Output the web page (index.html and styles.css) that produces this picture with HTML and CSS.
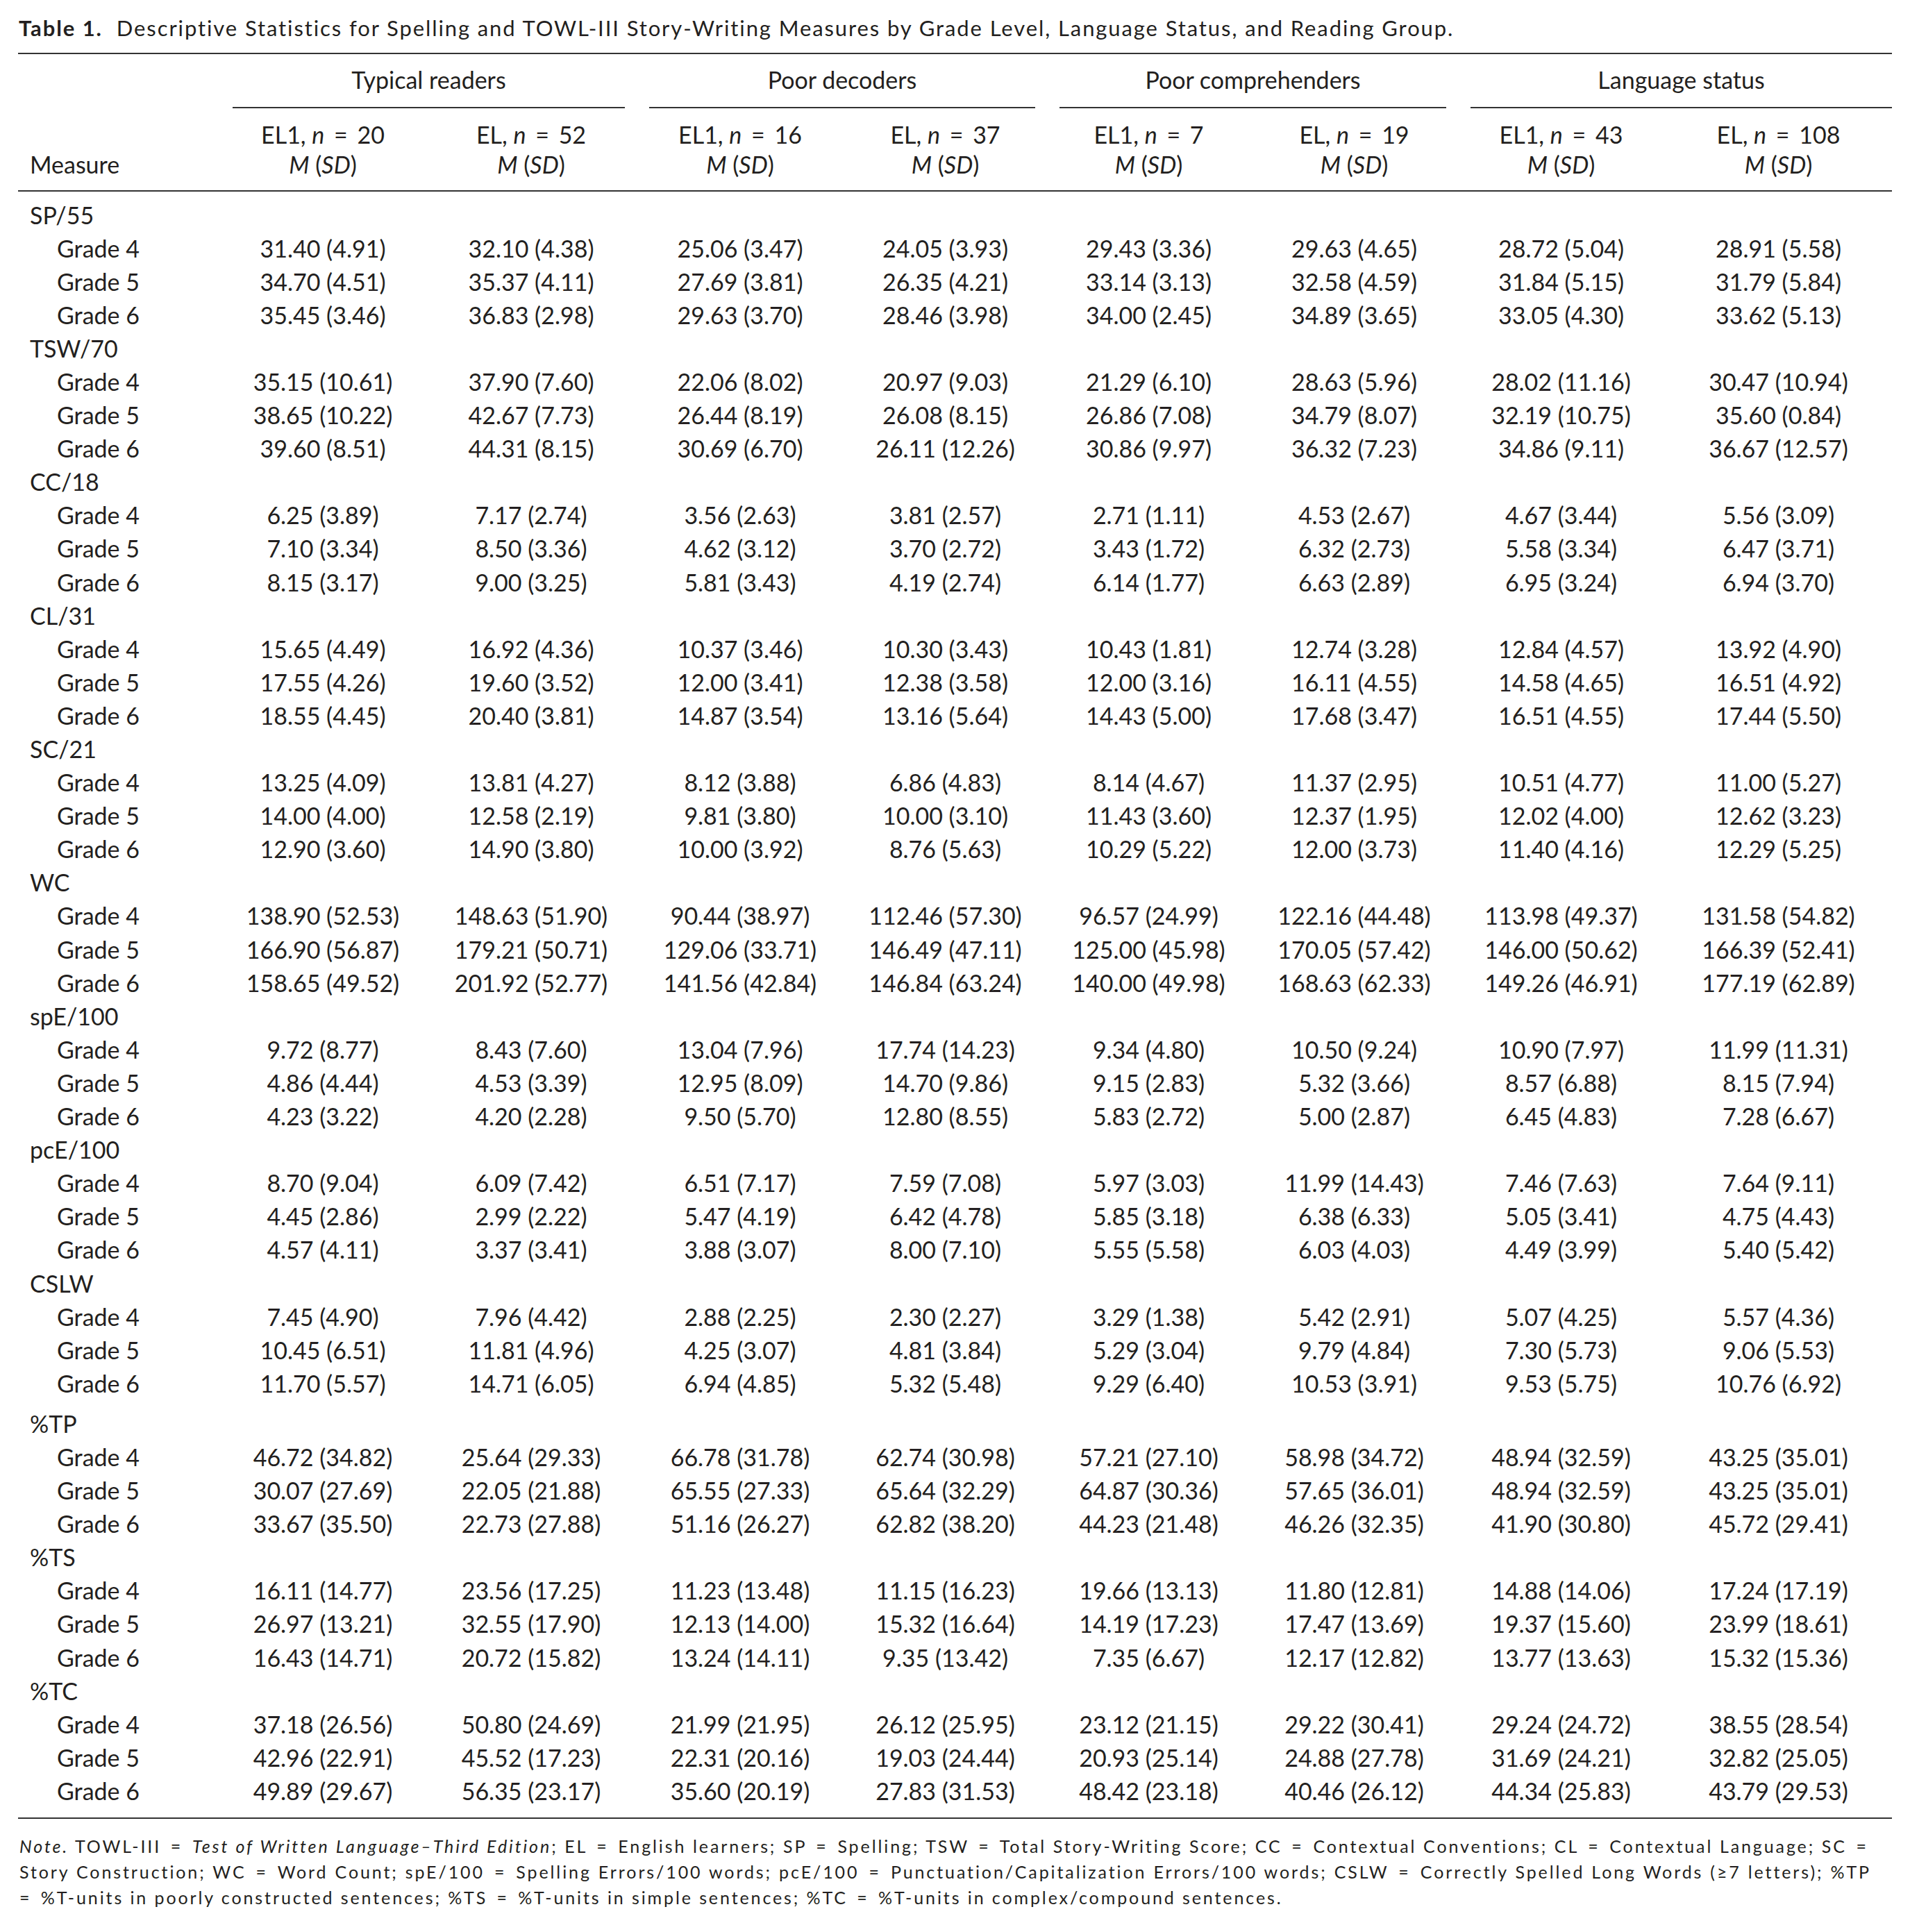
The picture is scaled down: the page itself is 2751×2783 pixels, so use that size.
FILE: index.html
```html
<!DOCTYPE html>
<html lang="en">
<head>
<meta charset="utf-8">
<title>Table 1</title>
<link rel="stylesheet" href="styles.css">
</head>
<body>
<div class="page">
  <div class="caption"><b class="label">Table 1.</b>Descriptive Statistics for Spelling and TOWL-III Story-Writing Measures by Grade Level, Language Status, and Reading Group.</div>
  <div class="table">
    <div class="groups">
      <div></div>
      <div class="grp">Typical readers</div>
      <div class="grp">Poor decoders</div>
      <div class="grp">Poor comprehenders</div>
      <div class="grp last">Language status</div>
    </div>
    <div class="sub">
      <div class="measure">Measure</div>
      <div class="sh">EL1, <i>n</i> <span class="eq">=</span> 20<br><i>M</i> (<i>SD</i>)</div>
      <div class="sh">EL, <i>n</i> <span class="eq">=</span> 52<br><i>M</i> (<i>SD</i>)</div>
      <div class="sh">EL1, <i>n</i> <span class="eq">=</span> 16<br><i>M</i> (<i>SD</i>)</div>
      <div class="sh">EL, <i>n</i> <span class="eq">=</span> 37<br><i>M</i> (<i>SD</i>)</div>
      <div class="sh">EL1, <i>n</i> <span class="eq">=</span> 7<br><i>M</i> (<i>SD</i>)</div>
      <div class="sh">EL, <i>n</i> <span class="eq">=</span> 19<br><i>M</i> (<i>SD</i>)</div>
      <div class="sh">EL1, <i>n</i> <span class="eq">=</span> 43<br><i>M</i> (<i>SD</i>)</div>
      <div class="sh">EL, <i>n</i> <span class="eq">=</span> 108<br><i>M</i> (<i>SD</i>)</div>
    </div>
    <div class="body">
      <div class="r"><span class="m">SP/55</span></div>
      <div class="r"><span class="g">Grade 4</span><span>31.40 (4.91)</span><span>32.10 (4.38)</span><span>25.06 (3.47)</span><span>24.05 (3.93)</span><span>29.43 (3.36)</span><span>29.63 (4.65)</span><span>28.72 (5.04)</span><span>28.91 (5.58)</span></div>
      <div class="r"><span class="g">Grade 5</span><span>34.70 (4.51)</span><span>35.37 (4.11)</span><span>27.69 (3.81)</span><span>26.35 (4.21)</span><span>33.14 (3.13)</span><span>32.58 (4.59)</span><span>31.84 (5.15)</span><span>31.79 (5.84)</span></div>
      <div class="r"><span class="g">Grade 6</span><span>35.45 (3.46)</span><span>36.83 (2.98)</span><span>29.63 (3.70)</span><span>28.46 (3.98)</span><span>34.00 (2.45)</span><span>34.89 (3.65)</span><span>33.05 (4.30)</span><span>33.62 (5.13)</span></div>

      <div class="r"><span class="m">TSW/70</span></div>
      <div class="r"><span class="g">Grade 4</span><span>35.15 (10.61)</span><span>37.90 (7.60)</span><span>22.06 (8.02)</span><span>20.97 (9.03)</span><span>21.29 (6.10)</span><span>28.63 (5.96)</span><span>28.02 (11.16)</span><span>30.47 (10.94)</span></div>
      <div class="r"><span class="g">Grade 5</span><span>38.65 (10.22)</span><span>42.67 (7.73)</span><span>26.44 (8.19)</span><span>26.08 (8.15)</span><span>26.86 (7.08)</span><span>34.79 (8.07)</span><span>32.19 (10.75)</span><span>35.60 (0.84)</span></div>
      <div class="r"><span class="g">Grade 6</span><span>39.60 (8.51)</span><span>44.31 (8.15)</span><span>30.69 (6.70)</span><span>26.11 (12.26)</span><span>30.86 (9.97)</span><span>36.32 (7.23)</span><span>34.86 (9.11)</span><span>36.67 (12.57)</span></div>

      <div class="r"><span class="m">CC/18</span></div>
      <div class="r"><span class="g">Grade 4</span><span>6.25 (3.89)</span><span>7.17 (2.74)</span><span>3.56 (2.63)</span><span>3.81 (2.57)</span><span>2.71 (1.11)</span><span>4.53 (2.67)</span><span>4.67 (3.44)</span><span>5.56 (3.09)</span></div>
      <div class="r"><span class="g">Grade 5</span><span>7.10 (3.34)</span><span>8.50 (3.36)</span><span>4.62 (3.12)</span><span>3.70 (2.72)</span><span>3.43 (1.72)</span><span>6.32 (2.73)</span><span>5.58 (3.34)</span><span>6.47 (3.71)</span></div>
      <div class="r"><span class="g">Grade 6</span><span>8.15 (3.17)</span><span>9.00 (3.25)</span><span>5.81 (3.43)</span><span>4.19 (2.74)</span><span>6.14 (1.77)</span><span>6.63 (2.89)</span><span>6.95 (3.24)</span><span>6.94 (3.70)</span></div>

      <div class="r"><span class="m">CL/31</span></div>
      <div class="r"><span class="g">Grade 4</span><span>15.65 (4.49)</span><span>16.92 (4.36)</span><span>10.37 (3.46)</span><span>10.30 (3.43)</span><span>10.43 (1.81)</span><span>12.74 (3.28)</span><span>12.84 (4.57)</span><span>13.92 (4.90)</span></div>
      <div class="r"><span class="g">Grade 5</span><span>17.55 (4.26)</span><span>19.60 (3.52)</span><span>12.00 (3.41)</span><span>12.38 (3.58)</span><span>12.00 (3.16)</span><span>16.11 (4.55)</span><span>14.58 (4.65)</span><span>16.51 (4.92)</span></div>
      <div class="r"><span class="g">Grade 6</span><span>18.55 (4.45)</span><span>20.40 (3.81)</span><span>14.87 (3.54)</span><span>13.16 (5.64)</span><span>14.43 (5.00)</span><span>17.68 (3.47)</span><span>16.51 (4.55)</span><span>17.44 (5.50)</span></div>

      <div class="r"><span class="m">SC/21</span></div>
      <div class="r"><span class="g">Grade 4</span><span>13.25 (4.09)</span><span>13.81 (4.27)</span><span>8.12 (3.88)</span><span>6.86 (4.83)</span><span>8.14 (4.67)</span><span>11.37 (2.95)</span><span>10.51 (4.77)</span><span>11.00 (5.27)</span></div>
      <div class="r"><span class="g">Grade 5</span><span>14.00 (4.00)</span><span>12.58 (2.19)</span><span>9.81 (3.80)</span><span>10.00 (3.10)</span><span>11.43 (3.60)</span><span>12.37 (1.95)</span><span>12.02 (4.00)</span><span>12.62 (3.23)</span></div>
      <div class="r"><span class="g">Grade 6</span><span>12.90 (3.60)</span><span>14.90 (3.80)</span><span>10.00 (3.92)</span><span>8.76 (5.63)</span><span>10.29 (5.22)</span><span>12.00 (3.73)</span><span>11.40 (4.16)</span><span>12.29 (5.25)</span></div>

      <div class="r"><span class="m">WC</span></div>
      <div class="r"><span class="g">Grade 4</span><span>138.90 (52.53)</span><span>148.63 (51.90)</span><span>90.44 (38.97)</span><span>112.46 (57.30)</span><span>96.57 (24.99)</span><span>122.16 (44.48)</span><span>113.98 (49.37)</span><span>131.58 (54.82)</span></div>
      <div class="r"><span class="g">Grade 5</span><span>166.90 (56.87)</span><span>179.21 (50.71)</span><span>129.06 (33.71)</span><span>146.49 (47.11)</span><span>125.00 (45.98)</span><span>170.05 (57.42)</span><span>146.00 (50.62)</span><span>166.39 (52.41)</span></div>
      <div class="r"><span class="g">Grade 6</span><span>158.65 (49.52)</span><span>201.92 (52.77)</span><span>141.56 (42.84)</span><span>146.84 (63.24)</span><span>140.00 (49.98)</span><span>168.63 (62.33)</span><span>149.26 (46.91)</span><span>177.19 (62.89)</span></div>

      <div class="r"><span class="m">spE/100</span></div>
      <div class="r"><span class="g">Grade 4</span><span>9.72 (8.77)</span><span>8.43 (7.60)</span><span>13.04 (7.96)</span><span>17.74 (14.23)</span><span>9.34 (4.80)</span><span>10.50 (9.24)</span><span>10.90 (7.97)</span><span>11.99 (11.31)</span></div>
      <div class="r"><span class="g">Grade 5</span><span>4.86 (4.44)</span><span>4.53 (3.39)</span><span>12.95 (8.09)</span><span>14.70 (9.86)</span><span>9.15 (2.83)</span><span>5.32 (3.66)</span><span>8.57 (6.88)</span><span>8.15 (7.94)</span></div>
      <div class="r"><span class="g">Grade 6</span><span>4.23 (3.22)</span><span>4.20 (2.28)</span><span>9.50 (5.70)</span><span>12.80 (8.55)</span><span>5.83 (2.72)</span><span>5.00 (2.87)</span><span>6.45 (4.83)</span><span>7.28 (6.67)</span></div>

      <div class="r"><span class="m">pcE/100</span></div>
      <div class="r"><span class="g">Grade 4</span><span>8.70 (9.04)</span><span>6.09 (7.42)</span><span>6.51 (7.17)</span><span>7.59 (7.08)</span><span>5.97 (3.03)</span><span>11.99 (14.43)</span><span>7.46 (7.63)</span><span>7.64 (9.11)</span></div>
      <div class="r"><span class="g">Grade 5</span><span>4.45 (2.86)</span><span>2.99 (2.22)</span><span>5.47 (4.19)</span><span>6.42 (4.78)</span><span>5.85 (3.18)</span><span>6.38 (6.33)</span><span>5.05 (3.41)</span><span>4.75 (4.43)</span></div>
      <div class="r"><span class="g">Grade 6</span><span>4.57 (4.11)</span><span>3.37 (3.41)</span><span>3.88 (3.07)</span><span>8.00 (7.10)</span><span>5.55 (5.58)</span><span>6.03 (4.03)</span><span>4.49 (3.99)</span><span>5.40 (5.42)</span></div>

      <div class="r"><span class="m">CSLW</span></div>
      <div class="r"><span class="g">Grade 4</span><span>7.45 (4.90)</span><span>7.96 (4.42)</span><span>2.88 (2.25)</span><span>2.30 (2.27)</span><span>3.29 (1.38)</span><span>5.42 (2.91)</span><span>5.07 (4.25)</span><span>5.57 (4.36)</span></div>
      <div class="r"><span class="g">Grade 5</span><span>10.45 (6.51)</span><span>11.81 (4.96)</span><span>4.25 (3.07)</span><span>4.81 (3.84)</span><span>5.29 (3.04)</span><span>9.79 (4.84)</span><span>7.30 (5.73)</span><span>9.06 (5.53)</span></div>
      <div class="r"><span class="g">Grade 6</span><span>11.70 (5.57)</span><span>14.71 (6.05)</span><span>6.94 (4.85)</span><span>5.32 (5.48)</span><span>9.29 (6.40)</span><span>10.53 (3.91)</span><span>9.53 (5.75)</span><span>10.76 (6.92)</span></div>

      <div class="r gap"><span class="m">%TP</span></div>
      <div class="r"><span class="g">Grade 4</span><span>46.72 (34.82)</span><span>25.64 (29.33)</span><span>66.78 (31.78)</span><span>62.74 (30.98)</span><span>57.21 (27.10)</span><span>58.98 (34.72)</span><span>48.94 (32.59)</span><span>43.25 (35.01)</span></div>
      <div class="r"><span class="g">Grade 5</span><span>30.07 (27.69)</span><span>22.05 (21.88)</span><span>65.55 (27.33)</span><span>65.64 (32.29)</span><span>64.87 (30.36)</span><span>57.65 (36.01)</span><span>48.94 (32.59)</span><span>43.25 (35.01)</span></div>
      <div class="r"><span class="g">Grade 6</span><span>33.67 (35.50)</span><span>22.73 (27.88)</span><span>51.16 (26.27)</span><span>62.82 (38.20)</span><span>44.23 (21.48)</span><span>46.26 (32.35)</span><span>41.90 (30.80)</span><span>45.72 (29.41)</span></div>

      <div class="r"><span class="m">%TS</span></div>
      <div class="r"><span class="g">Grade 4</span><span>16.11 (14.77)</span><span>23.56 (17.25)</span><span>11.23 (13.48)</span><span>11.15 (16.23)</span><span>19.66 (13.13)</span><span>11.80 (12.81)</span><span>14.88 (14.06)</span><span>17.24 (17.19)</span></div>
      <div class="r"><span class="g">Grade 5</span><span>26.97 (13.21)</span><span>32.55 (17.90)</span><span>12.13 (14.00)</span><span>15.32 (16.64)</span><span>14.19 (17.23)</span><span>17.47 (13.69)</span><span>19.37 (15.60)</span><span>23.99 (18.61)</span></div>
      <div class="r"><span class="g">Grade 6</span><span>16.43 (14.71)</span><span>20.72 (15.82)</span><span>13.24 (14.11)</span><span>9.35 (13.42)</span><span>7.35 (6.67)</span><span>12.17 (12.82)</span><span>13.77 (13.63)</span><span>15.32 (15.36)</span></div>

      <div class="r"><span class="m">%TC</span></div>
      <div class="r"><span class="g">Grade 4</span><span>37.18 (26.56)</span><span>50.80 (24.69)</span><span>21.99 (21.95)</span><span>26.12 (25.95)</span><span>23.12 (21.15)</span><span>29.22 (30.41)</span><span>29.24 (24.72)</span><span>38.55 (28.54)</span></div>
      <div class="r"><span class="g">Grade 5</span><span>42.96 (22.91)</span><span>45.52 (17.23)</span><span>22.31 (20.16)</span><span>19.03 (24.44)</span><span>20.93 (25.14)</span><span>24.88 (27.78)</span><span>31.69 (24.21)</span><span>32.82 (25.05)</span></div>
      <div class="r"><span class="g">Grade 6</span><span>49.89 (29.67)</span><span>56.35 (23.17)</span><span>35.60 (20.19)</span><span>27.83 (31.53)</span><span>48.42 (23.18)</span><span>40.46 (26.12)</span><span>44.34 (25.83)</span><span>43.79 (29.53)</span></div>
    </div>
  </div>
  <div class="note">
    <div class="ln"><i>Note.</i> TOWL-III <span class="eq">=</span> <i>Test of Written Language–Third Edition</i>; EL <span class="eq">=</span> English learners; SP <span class="eq">=</span> Spelling; TSW <span class="eq">=</span> Total Story-Writing Score; CC <span class="eq">=</span> Contextual Conventions; CL <span class="eq">=</span> Contextual Language; SC <span class="eq">=</span></div>
    <div class="ln">Story Construction; WC <span class="eq">=</span> Word Count; spE/100 <span class="eq">=</span> Spelling Errors/100 words; pcE/100 <span class="eq">=</span> Punctuation/Capitalization Errors/100 words; CSLW <span class="eq">=</span> Correctly Spelled Long Words (≥7 letters); %TP</div>
    <div class="ln end"><span class="eq first">=</span> %T-units in poorly constructed sentences; %TS <span class="eq">=</span> %T-units in simple sentences; %TC <span class="eq">=</span> %T-units in complex/compound sentences.</div>
  </div>
</div>
</body>
</html>
```
FILE: styles.css
```css
html, body {
  margin: 0;
  padding: 0;
  background: #ffffff;
}

body {
  font-family: Lato, "Open Sans", "DejaVu Sans", sans-serif;
  color: #231f20;
}

.page {
  width: 2699px;
  padding-left: 26px;
}

.caption {
  font-size: 31px;
  line-height: 40px;
  letter-spacing: 1.9px;
  padding-top: 20px;
  padding-left: 1px;
  white-space: nowrap;
}

.caption .label {
  font-weight: 700;
  margin-right: 20px;
}

.eq {
  margin: 0 5px;
}

.eq.first {
  margin-left: 0;
}

.table {
  margin-top: 16px;
  border-top: 2px solid #333;
  font-size: 34px;
}

.groups,
.sub,
.r {
  display: grid;
  grid-template-columns: 290px 298px 302px 300px 291px 295px 297px 299px 327px;
}

.groups {
  padding-top: 13px;
}

.grp {
  grid-column: span 2;
  text-align: center;
  line-height: 48px;
  padding-bottom: 15px;
  margin: 0 16px 0 19px;
  border-bottom: 2px solid #333;
}

.grp.last {
  margin-right: 0;
}

.sub {
  padding-top: 16px;
  padding-bottom: 16px;
  border-bottom: 2px solid #333;
  line-height: 43px;
}

.measure {
  align-self: end;
  padding-left: 17px;
}

.sh {
  text-align: center;
  white-space: nowrap;
}

.body {
  padding-top: 9.5px;
  padding-bottom: 14px;
  border-bottom: 2px solid #333;
}

.r {
  line-height: 48.1px;
  height: 48.1px;
}

.r span {
  text-align: center;
  white-space: nowrap;
}

.r span.m {
  text-align: left;
  padding-left: 17px;
}

.r span.g {
  text-align: left;
  padding-left: 56px;
}

.r.gap {
  margin-top: 10px;
}

.note {
  font-size: 25px;
  line-height: 37px;
  letter-spacing: 2.9px;
  padding-top: 21px;
  margin-left: 2px;
  width: 2667px;
}

.note .eq {
  margin: 0 4px;
}

.note .eq.first {
  margin-left: 0;
}

.ln {
  text-align: justify;
  text-align-last: justify;
  white-space: nowrap;
}

.ln.end {
  text-align-last: left;
}
```
